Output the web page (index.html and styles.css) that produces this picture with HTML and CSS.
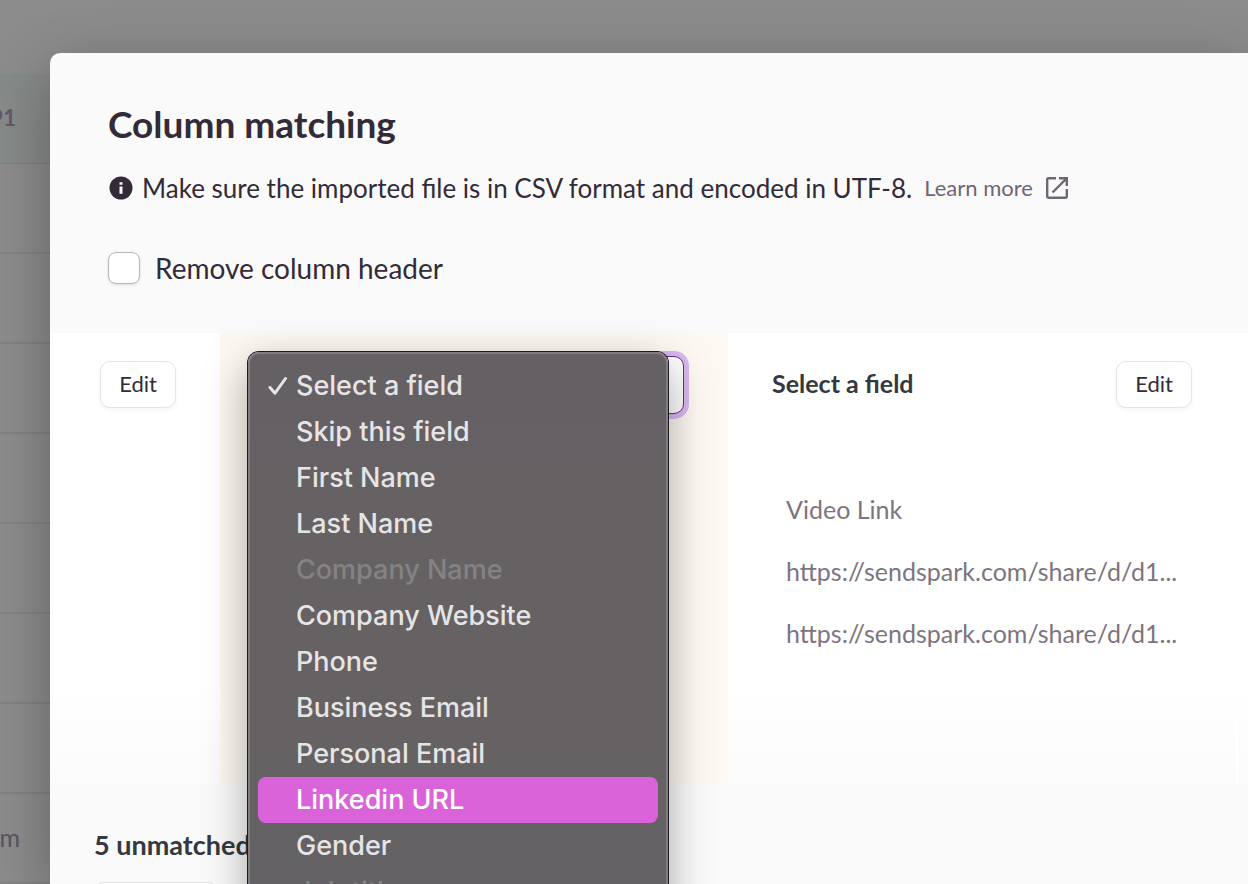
FILE: index.html
```html
<!DOCTYPE html>
<html lang="en">
<head>
    <meta charset="UTF-8">
    <title>Column matching</title>
    <link rel="stylesheet" href="styles.css">
</head>
<body>
    <!-- Dimmed page behind the modal -->
    <div class="backdrop">
        <div class="row row-head"><span class="cell strong">91</span></div>
        <div class="row"></div>
        <div class="row"></div>
        <div class="row"></div>
        <div class="row"></div>
        <div class="row"></div>
        <div class="row"></div>
        <div class="row"></div>
        <div class="row"><span class="cell">m</span></div>
    </div>

    <main class="modal">
        <header class="modal-header">
            <h1>Column matching</h1>
            <div class="notice">
                <svg class="info-icon" viewBox="0 0 24 24">
                    <circle cx="12" cy="12" r="11.5" fill="#332b38"/>
                    <path d="M10.5 6.2h3v2.6h-3zM10.5 10.5h3v7.3h-3z" fill="#fafafa"/>
                </svg>
                <span>Make sure the imported file is in CSV format and encoded in UTF-8.</span>
                <a href="#" class="learn-more">Learn more
                    <svg class="link-icon" viewBox="0 0 24 24" fill="none" stroke="#6f6673" stroke-width="2.4">
                        <path d="M11 2.2H3.4Q2.2 2.2 2.2 3.4V20.6Q2.2 21.8 3.4 21.8H20.6Q21.8 21.8 21.8 20.6V13"/>
                        <path d="M14 2.2H21.8V10M21.5 2.5L7.5 16.5"/>
                    </svg>
                </a>
            </div>
            <label class="check-row">
                <input type="checkbox" class="checkbox">
                Remove column header
            </label>
        </header>

        <section class="columns">
            <div class="column">
                <div class="column-head end">
                    <button class="btn">Edit</button>
                </div>
            </div>

            <div class="column active">
                <select class="field-select" aria-label="Select a field">
                    <option></option>
                </select>
                <ul class="menu" role="listbox" aria-label="Fields">
                    <li class="item" role="option" aria-selected="true">
                        <svg class="tick" viewBox="0 0 20 20" fill="none" stroke="#e6e5e6" stroke-width="3" stroke-linecap="round" stroke-linejoin="round">
                            <path d="M2 11.5L7 17.2L17.5 2.5"/>
                        </svg>
                        Select a field
                    </li>
                    <li class="item" role="option">Skip this field</li>
                    <li class="item" role="option">First Name</li>
                    <li class="item" role="option">Last Name</li>
                    <li class="item disabled" role="option" aria-disabled="true">Company Name</li>
                    <li class="item" role="option">Company Website</li>
                    <li class="item" role="option">Phone</li>
                    <li class="item" role="option">Business Email</li>
                    <li class="item" role="option">Personal Email</li>
                    <li class="item highlighted" role="option">Linkedin URL</li>
                    <li class="item" role="option">Gender</li>
                    <li class="item disabled" role="option" aria-disabled="true">Job title</li>
                </ul>
            </div>

            <div class="column">
                <div class="column-head">
                    <h2>Select a field</h2>
                    <button class="btn">Edit</button>
                </div>
                <div class="values">
                    <div>Video Link</div>
                    <div>https://sendspark.com/share/d/d1...</div>
                    <div>https://sendspark.com/share/d/d1...</div>
                </div>
            </div>

            <div class="column next"></div>
        </section>

        <footer class="modal-footer">
            <p>5 unmatched</p>
            <button class="btn footer-btn" aria-label="Skip"></button>
        </footer>
    </main>
</body>
</html>
```
FILE: styles.css
```css
* {
    box-sizing: border-box;
}
body {
    margin: 0;
    height: 100vh;
    overflow: hidden;
    position: relative;
    background: #8c8c8c;
    color: #332b38;
    font-family: Lato, sans-serif;
}
h1, h2, p, ul {
    margin: 0;
    padding: 0;
}
.backdrop {
    padding-top: 74px;
}
.row {
    height: 90px;
    display: flex;
    align-items: center;
    border-bottom: 2px solid #828282;
}
.row-head {
    background: #868a88;
    border-bottom: 1px solid #7b7d7c;
}
.cell {
    width: 20px;
    display: flex;
    justify-content: flex-end;
    font-size: 25px;
    line-height: 32px;
    padding-bottom: 2px;
    color: #5c5260;
}
.cell.strong {
    width: 16px;
    font-size: 22px;
    font-weight: bold;
    color: #65566b;
}
.modal {
    position: absolute;
    top: 53px;
    left: 50px;
    right: 0;
    bottom: 0;
    overflow: hidden;
    background: #fafafa;
    border-radius: 10px 0 0 0;
    box-shadow: 0 16px 60px rgba(0, 0, 0, 0.3);
}
.modal-header {
    padding: 47px 58px 49px;
}
h1 {
    font-size: 37px;
    line-height: 48px;
}
.notice {
    display: flex;
    align-items: center;
    margin-top: 24px;
    font-size: 26px;
    line-height: 32px;
    white-space: nowrap;
}
.info-icon {
    width: 24px;
    height: 24px;
    margin: 0 9px 0 1px;
}
.learn-more {
    display: flex;
    align-items: center;
    gap: 12px;
    margin-left: 12px;
    font-size: 22px;
    color: #6f6673;
    text-decoration: none;
}
.link-icon {
    width: 24px;
    height: 24px;
}
.check-row {
    display: flex;
    align-items: center;
    gap: 15px;
    margin-top: 48px;
    font-size: 28px;
    line-height: 32px;
}
.checkbox {
    appearance: none;
    width: 32px;
    height: 32px;
    margin: 0;
    background: #fff;
    border: 1px solid #b9b7ba;
    border-radius: 8px;
    box-shadow: 0 1px 3px rgba(0, 0, 0, 0.12);
}
.columns {
    display: grid;
    grid-template-columns: 170fr 508fr 508fr 12fr;
    height: 450px;
}
.column {
    position: relative;
    padding: 28px 44px;
    background: linear-gradient(#fff 350px, #fbfbfb);
    border-bottom: 1px solid #fff;
}
.column.next {
    padding: 0;
    border-left: 2px solid #fff;
}
.column-head {
    display: flex;
    align-items: center;
    justify-content: space-between;
}
.column-head.end {
    justify-content: flex-end;
}
h2 {
    padding-bottom: 3px;
    font-size: 25px;
    line-height: 32px;
    color: #343840;
}
.btn {
    height: 47px;
    padding: 0 18px 2px;
    font-family: inherit;
    font-size: 22px;
    color: #332b38;
    background: #fff;
    border: 1px solid #e5e3e8;
    border-radius: 10px;
    box-shadow: 0 3px 4px rgba(0, 0, 0, 0.04);
}
.values {
    margin: 70px 14px 0;
    font-size: 25px;
    line-height: 62px;
    color: #7d747f;
    white-space: nowrap;
}
.active {
    z-index: 1;
    padding-top: 23px;
    background: #fdf8f2;
    border-bottom: none;
}
.field-select {
    appearance: none;
    display: block;
    width: 100%;
    height: 58px;
    background: #fff;
    border: 1px solid #6b2e86;
    border-radius: 10px;
    box-shadow: 0 0 0 5px #d9b8ee;
}
.menu {
    position: absolute;
    top: 19px;
    left: 28px;
    width: 420px;
    padding: 9px 8px;
    list-style: none;
    font-family: Inter, sans-serif;
    font-size: 27px;
    font-weight: 500;
    line-height: 46px;
    color: #e6e5e6;
    background: linear-gradient(#656064 60px, #666263 180px 400px, #636166);
    border: 2px solid #7f7d80;
    border-radius: 11px;
    box-shadow: 0 0 0 1px #1d1a20, 0 14px 44px rgba(0, 0, 0, 0.35);
}
.item {
    position: relative;
    padding-left: 38px;
    border-radius: 8px;
}
.item.disabled {
    color: #858285;
}
.item.highlighted {
    color: #fff;
    background: #db63d9;
}
.tick {
    position: absolute;
    left: 10px;
    top: 13px;
    width: 20px;
    height: 20px;
}
.modal-footer {
    padding: 46px 44px;
    font-size: 27px;
    font-weight: bold;
    line-height: 32px;
    color: #343840;
}
.footer-btn {
    width: 124px;
    margin-top: 21px;
}
```
